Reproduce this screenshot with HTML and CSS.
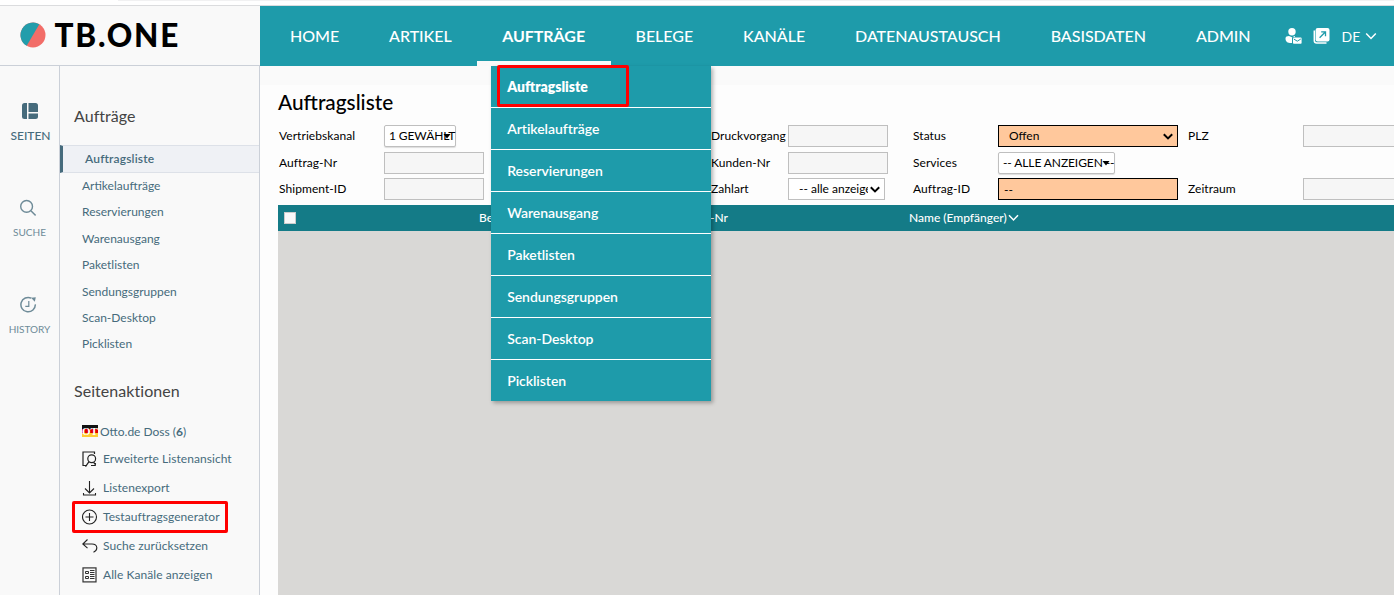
FILE: index.html
```html
<!DOCTYPE html>
<html lang="de">
<head>
    <meta charset="UTF-8">
    <title>TB.ONE</title>
    <link rel="stylesheet" href="styles.css">
</head>
<body>
    <div class="topline"></div>
    <header class="header">
        <div class="logo">
            <svg width="26" height="26" viewBox="0 0 26 26">
                <circle cx="13" cy="13" r="12.5" fill="#f26d68"/>
                <path d="M19.3 2.2A12.5 12.5 0 1 0 6.7 23.8z" fill="#239dab"/>
            </svg>
            <span class="logo-text">TB.ONE</span>
        </div>
        <nav class="nav">
            <a>HOME</a>
            <a>ARTIKEL</a>
            <div class="nav-open">
                <a class="active">AUFTRÄGE</a>
                <div class="dropdown">
                    <a class="current">Auftragsliste</a>
                    <a>Artikelaufträge</a>
                    <a>Reservierungen</a>
                    <a>Warenausgang</a>
                    <a>Paketlisten</a>
                    <a>Sendungsgruppen</a>
                    <a>Scan-Desktop</a>
                    <a>Picklisten</a>
                    <span class="marker marker-menu"></span>
                </div>
            </div>
            <a>BELEGE</a>
            <a>KANÄLE</a>
            <a>DATENAUSTAUSCH</a>
            <a>BASISDATEN</a>
            <a>ADMIN</a>
        </nav>
        <div class="tools">
            <svg width="17" height="16" viewBox="0 0 17 16">
                <circle cx="7" cy="3.7" r="3.7" fill="#fff"/>
                <path d="M0.5 10.2C0.5 8.8 2 8 4 8L7 9.2L10 8V9H8.2C7.4 9 7 9.5 7 10.2V15H6.2C2.5 15 0.5 13.5 0.5 10.2z" fill="#fff"/>
                <rect x="8" y="9.6" width="8.6" height="6.2" rx="0.8" fill="#fff"/>
                <path d="M8.8 11L12.3 13.2L15.8 11" fill="none" stroke="#1e9baa" stroke-width="1"/>
            </svg>
            <svg class="tool-open" width="17" height="16" viewBox="0 0 17 16">
                <rect x="2.6" y="0" width="13.9" height="13.4" rx="2" fill="#fff"/>
                <path d="M1.3 2.5V12.5Q1.3 15 3.7 15H13.5" fill="none" stroke="#fff" stroke-width="1.5"/>
                <path d="M6.6 9.7L12.3 4M8.2 3.8H12.5V8.2" fill="none" stroke="#1e9baa" stroke-width="1.3"/>
            </svg>
            <span class="lang">DE</span>
            <svg width="12" height="8" viewBox="0 0 12 8"><path d="M1.2 1.5L6 6.5L10.8 1.5" fill="none" stroke="#fff" stroke-width="1.5"/></svg>
        </div>
    </header>

    <div class="layout">
        <aside class="rail">
            <div class="rail-item active">
                <svg width="16" height="16" viewBox="0 0 16 16" fill="#466b7c">
                    <path d="M2.5 0H5V16H2.5Q0 16 0 13.5V2.5Q0 0 2.5 0z"/>
                    <path d="M6.5 0H13.5Q16 0 16 2.5V9H6.5z"/>
                    <path d="M6.5 10.5H16V13.5Q16 16 13.5 16H6.5z"/>
                </svg>
                <span>SEITEN</span>
            </div>
            <div class="rail-item">
                <svg width="16" height="17" viewBox="0 0 16 17" fill="none" stroke="#6e8b98" stroke-width="1.4">
                    <circle cx="6.6" cy="7.4" r="5.9"/><path d="M10.9 11.7L15.6 16.4"/>
                </svg>
                <span>SUCHE</span>
            </div>
            <div class="rail-item">
                <svg width="17" height="17" viewBox="0 0 17 17" fill="none" stroke="#6e8b98" stroke-width="1.5">
                    <path d="M11.3 2.2A7.2 7.2 0 1 0 15.3 8.4"/><path d="M8.8 5V10.3H5.3" stroke-width="1.2"/>
                    <path d="M11 1.8L15.8 1.2L14.8 5.8z" fill="#6e8b98" stroke="none"/>
                </svg>
                <span>HISTORY</span>
            </div>
        </aside>

        <aside class="sidebar">
            <h2>Aufträge</h2>
            <ul class="pages">
                <li class="active">Auftragsliste</li>
                <li>Artikelaufträge</li>
                <li>Reservierungen</li>
                <li>Warenausgang</li>
                <li>Paketlisten</li>
                <li>Sendungsgruppen</li>
                <li>Scan-Desktop</li>
                <li>Picklisten</li>
            </ul>
            <h2>Seitenaktionen</h2>
            <ul class="actions">
                <li class="otto"><span class="flag">OT</span>Otto.de Doss (<b>6</b>)</li>
                <li>
                    <svg width="16" height="16" viewBox="0 0 16 16" fill="none" stroke="#222" stroke-width="1.2">
                        <path d="M12.5 3V1H1V14.5H4.5M9 14.5H13.2V12"/><circle cx="9.7" cy="7.8" r="3.9"/><path d="M7 10.6L3.5 15.6M11.5 11.5L13.8 13.2"/>
                    </svg>
                    <span>Erweiterte Listenansicht</span>
                </li>
                <li>
                    <svg width="16" height="16" viewBox="0 0 16 16" fill="none" stroke="#222" stroke-width="1.1">
                        <path d="M7.5 1V13M3 8.5L7.5 13L12 8.5M1.5 13V15H13.5V13"/>
                    </svg>
                    <span>Listenexport</span>
                </li>
                <li>
                    <svg width="16" height="16" viewBox="0 0 16 16" fill="none" stroke="#222" stroke-width="1.1">
                        <circle cx="7.5" cy="8" r="7"/><path d="M3.5 8H11.5M7.5 4V12"/>
                    </svg>
                    <span>Testauftragsgenerator</span>
                    <span class="marker marker-action"></span>
                </li>
                <li>
                    <svg width="16" height="16" viewBox="0 0 16 16" fill="none" stroke="#222" stroke-width="1.1">
                        <path d="M5.5 1.5L0.8 6L5.5 10.2M0.8 6H10C16 6 16.2 12.2 11.5 14.2"/>
                    </svg>
                    <span>Suche zurücksetzen</span>
                </li>
                <li>
                    <svg width="16" height="16" viewBox="0 0 16 16" fill="none" stroke="#333" stroke-width="1">
                        <rect x="1" y="0.9" width="13" height="14" stroke-width="1.2"/>
                        <path d="M3.5 4.5h3v2h-3zM3.5 9.5h3v2h-3zM8 3.5h4.5M8 5.5h4.5M8 7.5h4.5M8 9.5h4.5M8 11.5h4.5"/>
                    </svg>
                    <span>Alle Kanäle anzeigen</span>
                </li>
            </ul>
        </aside>

        <main class="main">
            <h1>Auftragsliste</h1>
            <form class="filters">
                <label>Vertriebskanal</label>
                <div class="select multi multi-channel">1 GEWÄHLT<svg width="8" height="5" viewBox="0 0 8 5"><path d="M0.5 0H7.5L4 4.5z"/></svg></div>
                <label>Druckvorgang</label>
                <input type="text">
                <label>Status</label>
                <div class="select wide marked">Offen<svg width="12" height="8" viewBox="0 0 12 8"><path d="M1.8 1.3L6 5.4L10.2 1.3" fill="none" stroke="#000" stroke-width="2"/></svg></div>
                <label>PLZ</label>
                <input type="text" class="edge">

                <label>Auftrag-Nr</label>
                <input type="text">
                <label>Kunden-Nr</label>
                <input type="text">
                <label>Services</label>
                <div class="select multi multi-services">-- ALLE ANZEIGEN --<svg width="8" height="5" viewBox="0 0 8 5"><path d="M0.5 0H7.5L4 4.5z"/></svg></div>
                <span></span>
                <span></span>

                <label>Shipment-ID</label>
                <input type="text">
                <label>Zahlart</label>
                <div class="select payment"><span>-- alle anzeigen</span><svg width="12" height="8" viewBox="0 0 12 8"><path d="M1.8 1.3L6 5.4L10.2 1.3" fill="none" stroke="#000" stroke-width="2"/></svg></div>
                <label>Auftrag-ID</label>
                <input type="text" class="wide marked" value="--">
                <label>Zeitraum</label>
                <input type="text" class="edge">
            </form>
            <div class="table-head">
                <span class="check"></span>
                <span>Be</span>
                <span>-Nr</span>
                <span class="col-name">Name (Empfänger)<svg width="11" height="8" viewBox="0 0 11 8"><path d="M1 1.2L5.5 6L10 1.2" fill="none" stroke="#fff" stroke-width="1.5"/></svg></span>
            </div>
            <div class="table-body"></div>
        </main>
    </div>
</body>
</html>
```
FILE: styles.css
```css
* {
    box-sizing: border-box;
}
body {
    margin: 0;
    height: 595px;
    overflow: hidden;
    display: flex;
    flex-direction: column;
    background-color: #fdfdfd;
    font-family: Lato, sans-serif;
    font-size: 12px;
    color: #000;
}
svg {
    display: block;
    flex: none;
}
h1, h2, ul {
    margin: 0;
    padding: 0;
    font-weight: normal;
}
ul {
    list-style: none;
}
.topline {
    flex: none;
    height: 6px;
    background: linear-gradient(#f1f1f2, #f1f1f2) 118px 0 / 100% 1px no-repeat #fff;
    border-bottom: 1px solid #dbdcde;
}
.header {
    flex: none;
    display: flex;
    height: 60px;
    background-color: #1e9baa;
}
.logo {
    display: flex;
    align-items: center;
    width: 260px;
    padding-left: 19.5px;
    background-color: #f9f9f9;
    border-bottom: 1px solid #cbd0d8;
}
.logo-text {
    margin-left: 9px;
    font: 900 31.5px/58px Lato, sans-serif;
    letter-spacing: 1.8px;
}
.logo-text,
.logo svg {
    margin-bottom: 1px;
}
.nav {
    display: flex;
    padding-left: 5px;
}
.nav a {
    display: block;
    height: 60px;
    padding: 0 25px;
    line-height: 60px;
    font-size: 16px;
    font-weight: 500;
    letter-spacing: -0.04px;
    color: #fff;
    white-space: nowrap;
}
.nav a.active {
    padding: 0 25.5px;
    font-weight: bold;
    border-bottom: 5px solid #f9f9f9;
}
.nav-open {
    position: relative;
}
.nav .dropdown {
    position: absolute;
    top: 60px;
    left: 14px;
    z-index: 2;
    width: 220px;
    background-color: #1e9baa;
    box-shadow: 2px 2px 4px rgba(0, 0, 0, 0.3);
}
.nav .dropdown a {
    height: 42px;
    padding: 0 16.5px;
    border-bottom: 1px solid #fff;
    line-height: 42px;
    font-size: 14px;
    font-weight: 600;
}
.nav .dropdown a.current {
    font-weight: 800;
    letter-spacing: 0;
}
.nav .dropdown a:nth-of-type(8) {
    height: 41px;
    border-bottom: 0;
}
.marker {
    position: absolute;
    border: 3px solid #f00;
    border-radius: 2px;
}
.marker-menu {
    left: 6px;
    top: -1px;
    width: 132px;
    height: 42px;
}
.tools {
    display: flex;
    align-items: center;
    padding-left: 9px;
    color: #fff;
}
.tool-open {
    margin-left: 11px;
}
.lang {
    margin: 1px 5px 0 12px;
    font-size: 14px;
}
.layout {
    flex: 1;
    display: flex;
    min-height: 0;
}
.rail {
    flex: none;
    width: 60px;
    padding-top: 37px;
    background-color: #f9f9f9;
    border-right: 1px solid #cbd0d8;
}
.rail-item {
    display: flex;
    flex-direction: column;
    align-items: center;
    height: 97px;
    font-size: 10px;
    color: #6e8b98;
}
.rail-item span {
    margin-top: 9px;
    line-height: 14px;
}
.rail-item svg {
    margin-right: 3px;
}
.rail-item.active {
    height: 96px;
    font-size: 12px;
    color: #466b7c;
    font-weight: 500;
}
.rail-item.active span {
    margin: 10px 0 0 2px;
}
.rail-item.active svg {
    margin-right: 0;
}
.sidebar {
    flex: none;
    width: 200px;
    background-color: #f9f9f9;
    border-right: 1px solid #cbd0d8;
    color: #466b7c;
}
.sidebar h2 {
    padding: 40px 0 0 14px;
    font-size: 16px;
    line-height: 20px;
    letter-spacing: 0.05px;
    color: #444;
}
.pages {
    padding-top: 19px;
}
.pages li {
    height: 26.4px;
    padding-left: 22px;
    line-height: 25px;
}
.pages li.active {
    height: 28px;
    background-color: #eff1f5;
    border: 1px solid #dde1e8;
    border-width: 1px 0;
    border-left: 3px solid #466b7c;
    font-weight: 600;
    letter-spacing: 0.15px;
    line-height: 26px;
}
.sidebar .pages + h2 {
    padding-top: 23px;
}
.actions {
    padding: 16px 0 0 22px;
}
.actions li {
    position: relative;
    display: flex;
    align-items: center;
    height: 29px;
    letter-spacing: 0.06px;
    white-space: nowrap;
}
.actions li.otto {
    height: 27px;
    padding-top: 2px;
    letter-spacing: 0;
}
.actions svg {
    margin: 1px 5px 0 0;
}
.flag {
    width: 16px;
    height: 12px;
    margin-right: 2px;
    overflow: hidden;
    background: linear-gradient(#111 33%, #d00 33%, #d00 67%, #fc3 67%);
    color: #fff;
    font: bold 11px/12px "Liberation Serif", serif;
    text-align: center;
}
.marker-action {
    left: -10px;
    top: -1px;
    width: 156px;
    height: 32px;
}
.main {
    flex: 1;
    display: flex;
    flex-direction: column;
    min-width: 0;
    padding-left: 18px;
    border-top: 19px solid #fafafa;
}
h1 {
    padding-top: 3px;
    font-size: 20.8px;
    line-height: 27px;
    font-weight: 500;
}
.filters {
    display: grid;
    grid-template-columns: 105px 327px 77px 125px 85px 190px 115px 91px;
    grid-template-rows: 22px 22px 22px;
    row-gap: 4.5px;
    padding: 10px 0 5px 1px;
}
.filters label {
    line-height: 22px;
    letter-spacing: 0.06px;
    white-space: nowrap;
}
.filters input,
.select {
    width: 100px;
    height: 22px;
    padding: 0 5px;
    border: 1px solid #bfbfbf;
    background-color: #f6f6f6;
    font: 12px Lato, sans-serif;
}
.select {
    position: relative;
    padding-left: 10px;
    background-color: #fff;
    line-height: 20px;
    white-space: nowrap;
}
.select svg {
    position: absolute;
    right: 3px;
    top: 7px;
}
.filters .multi {
    padding-left: 4px;
    border-radius: 2px;
    box-shadow: 0 1px 1px #ddd;
    letter-spacing: -0.1px;
}
.filters .multi svg {
    top: 8px;
    right: 4px;
}
.multi-channel {
    width: 72px;
}
.multi-services {
    width: 117px;
}
.filters .wide {
    width: 180px;
}
.filters .marked {
    background-color: #ffc89c;
    border-color: #000;
}
.filters .edge {
    width: 91px;
    border-right: 0;
}
.payment {
    width: 97px;
}
.payment span {
    display: block;
    width: 69px;
    overflow: hidden;
}
.table-head {
    flex: none;
    display: grid;
    grid-template-columns: 201px 231px 199px 1fr;
    align-items: center;
    height: 26px;
    padding-bottom: 1px;
    background-color: #147b87;
    color: #fff;
    font-weight: 500;
    white-space: nowrap;
}
.check {
    width: 12px;
    height: 12px;
    margin: 1px 0 0 6px;
    background-color: #f9f9f9;
    border: 1px solid #ccc;
}
.col-name {
    display: flex;
    align-items: center;
}
.col-name svg {
    margin-left: 1px;
}
.table-body {
    flex: 1;
    background-color: #d9d8d6;
}
```
